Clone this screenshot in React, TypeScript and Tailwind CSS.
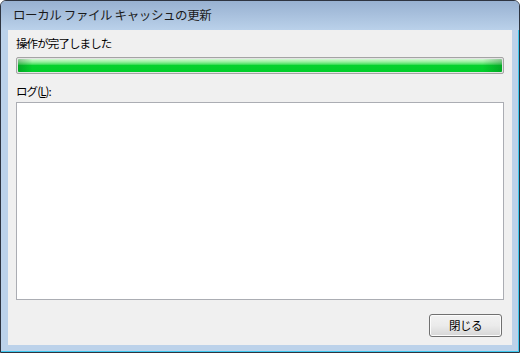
export default function App() {
  const font = { fontFamily: '"Noto Sans CJK JP", "Noto Sans", sans-serif' };

  return (
    <div className="h-[353px] w-[520px] bg-white" style={font}>
      <div className="flex h-[353px] w-[520px] flex-col overflow-hidden rounded-t-[6px] border border-[#2e3440] bg-[#bcd2ea]">
        <div className="flex h-[29px] shrink-0 items-center bg-gradient-to-b from-[#98b1d1] to-[#bad1ea] pl-[12px] text-[12.5px] leading-none tracking-[-0.4px] text-[#1a1a1a]">
          ローカル ファイル キャッシュの更新
        </div>
        <div className="flex flex-1 border-r border-b border-[#3ec8ee] pb-[6px] pl-[7px] pr-[6px]">
          <div className="flex flex-1 flex-col bg-[#f0f0f0] px-[8px] text-[11.5px] leading-[16px] tracking-[-0.9px] text-black">
            <div className="mt-[5px]">操作が完了しました</div>

            <div className="mt-[6px] h-[17px] rounded-[2px] border border-[#a4a4a4] bg-[#e4e4e4] p-px">
              <div className="relative h-full w-full overflow-hidden rounded-[1px] bg-[linear-gradient(to_bottom,#d2f8d2_0%,#98f0a0_22%,#4fe266_40%,#06d12e_50%,#00cf2a_100%)]">
                <div className="absolute inset-0 bg-[linear-gradient(to_right,rgba(0,80,20,0.3)_0%,rgba(0,80,20,0)_3%,rgba(0,80,20,0)_96%,rgba(0,80,20,0.3)_100%)]" />
              </div>
            </div>

            <div className="mt-[9px]">
              ログ(<span className="underline">L</span>):
            </div>

            <div className="mt-[3px] h-[198px] border border-[#abadb3] bg-white" />

            <div className="mt-[14px] flex justify-end pr-[2px]">
              <button className="flex h-[23px] w-[73px] items-center justify-center rounded-[3px] border border-[#707070] bg-gradient-to-b from-[#f2f2f2] via-[#ebebeb] to-[#d6d6d6] text-[11.5px] leading-none tracking-[-0.5px] text-black shadow-[inset_0_0_0_1px_#fcfcfc]">
                閉じる
              </button>
            </div>
          </div>
        </div>
      </div>
    </div>
  );
}
